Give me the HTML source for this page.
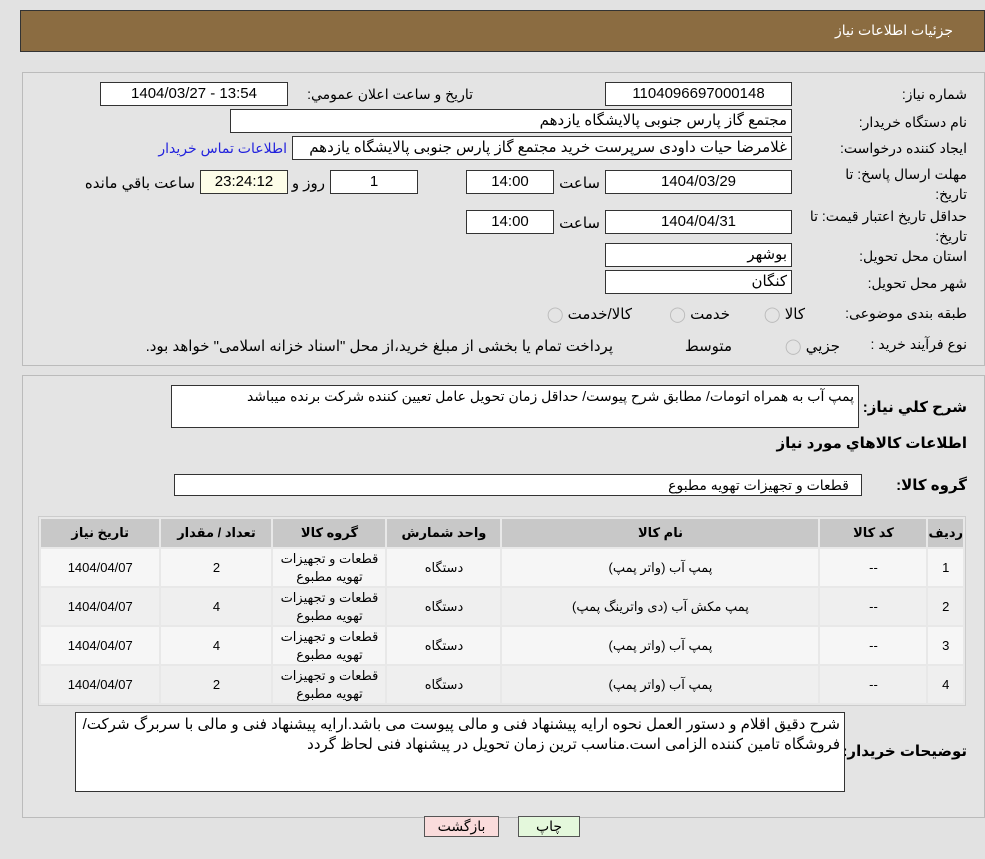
<!DOCTYPE html>
<html><head><meta charset="utf-8"><style>
body{margin:0;width:985px;height:859px;background:#e2e2e2;font-family:"Liberation Sans","DejaVu Sans",sans-serif;font-size:14px;color:#000;position:relative;overflow:hidden}
.a{position:absolute;white-space:nowrap}
.box{position:absolute;background:#fff;border:1px solid #333;box-sizing:border-box;text-align:center;line-height:22px;font-size:15px}
.lbl{position:absolute;direction:rtl;text-align:right;font-size:14px;white-space:nowrap}
.r{direction:rtl;text-align:right;padding-right:4px}
table{position:absolute;left:38px;top:516px;width:928px;border-collapse:separate;border-spacing:2px;background:#e8e8e8;direction:rtl;border:1px solid #ccc}
th{background:#c8c8c8;height:28px;font-size:13px;font-weight:bold;padding:0}
td{background:#f6f6f6;height:37px;text-align:center;font-size:13px;line-height:18px;padding:0}
tr:nth-child(odd) td{background:#efefef}
.btn{position:absolute;top:816px;height:21px;border:1px solid #555;box-sizing:border-box;text-align:center;line-height:19px;font-size:14px}
</style></head><body>
<div class="a" style="left:20px;top:10px;width:965px;height:42px;background:#8b6c41;border:1px solid #333;box-sizing:border-box"></div>
<div class="a" style="right:32px;top:22px;color:#fff;font-size:14px;direction:rtl">جزئیات اطلاعات نیاز</div>

<div class="a" style="left:22px;top:72px;width:963px;height:294px;border:1px solid #bbb;box-sizing:border-box;background:#e4e4e4"></div>
<div class="lbl" style="right:18px;top:86px">شماره نیاز:</div>
<div class="box" style="left:605px;top:82px;width:187px;height:24px">1104096697000148</div>
<div class="lbl" style="right:512px;top:86px">تاریخ و ساعت اعلان عمومي:</div>
<div class="box" style="left:100px;top:82px;width:188px;height:24px">1404/03/27 - 13:54</div>

<div class="lbl" style="right:18px;top:114px">نام دستگاه خریدار:</div>
<div class="box r" style="left:230px;top:109px;width:562px;height:24px">مجتمع گاز پارس جنوبی  پالایشگاه یازدهم</div>

<div class="lbl" style="right:18px;top:140px">ایجاد کننده درخواست:</div>
<div class="box r" style="left:292px;top:136px;width:500px;height:24px">غلامرضا حیات داودی سرپرست خرید مجتمع گاز پارس جنوبی  پالایشگاه یازدهم</div>
<div class="lbl" style="right:698px;top:140px;color:#2222dd">اطلاعات تماس خریدار</div>

<div class="lbl" style="right:18px;top:164px;line-height:20px">مهلت ارسال پاسخ: تا<br>تاریخ:</div>
<div class="box" style="left:605px;top:170px;width:187px;height:24px">1404/03/29</div>
<div class="lbl" style="right:385px;top:174px;font-size:15px">ساعت</div>
<div class="box" style="left:466px;top:170px;width:88px;height:24px">14:00</div>
<div class="box" style="left:330px;top:170px;width:88px;height:24px">1</div>
<div class="lbl" style="right:660px;top:174px;font-size:15px">روز و</div>
<div class="box" style="left:200px;top:170px;width:88px;height:24px;background:#fdfde8">23:24:12</div>
<div class="lbl" style="right:790px;top:174px;font-size:15px">ساعت باقي مانده</div>

<div class="lbl" style="right:18px;top:206px;line-height:20px">حداقل تاریخ اعتبار قیمت: تا<br>تاریخ:</div>
<div class="box" style="left:605px;top:210px;width:187px;height:24px">1404/04/31</div>
<div class="lbl" style="right:385px;top:214px;font-size:15px">ساعت</div>
<div class="box" style="left:466px;top:210px;width:88px;height:24px">14:00</div>

<div class="lbl" style="right:18px;top:248px">استان محل تحویل:</div>
<div class="box r" style="left:605px;top:243px;width:187px;height:24px">بوشهر</div>
<div class="lbl" style="right:18px;top:275px">شهر محل تحویل:</div>
<div class="box r" style="left:605px;top:270px;width:187px;height:24px">کنگان</div>

<div class="lbl" style="right:18px;top:305px">طبقه بندی موضوعی:</div>
<div class="lbl" style="right:180px;top:305px;font-size:15px">کالا <span style="color:#bbb">◯</span></div>
<div class="lbl" style="right:255px;top:305px;font-size:15px">خدمت <span style="color:#bbb">◯</span></div>
<div class="lbl" style="right:353px;top:305px;font-size:15px">کالا/خدمت <span style="color:#bbb">◯</span></div>
<div class="lbl" style="right:18px;top:336px">نوع فرآیند خرید :</div>
<div class="lbl" style="right:145px;top:337px;font-size:15px">جزیي <span style="color:#bbb">◯</span></div>
<div class="lbl" style="right:253px;top:337px;font-size:15px">متوسط</div>
<div class="lbl" style="right:372px;top:337px;font-size:15px">پرداخت تمام یا بخشی از مبلغ خرید،از محل "اسناد خزانه اسلامی" خواهد بود.</div>

<div class="a" style="left:22px;top:375px;width:963px;height:443px;border:1px solid #bbb;box-sizing:border-box;background:#e4e4e4"></div>
<div class="lbl" style="right:18px;top:398px;font-weight:bold;font-size:15px">شرح كلي نياز:</div>
<div class="box r" style="left:171px;top:385px;width:688px;height:43px;text-align:right;font-size:14px;line-height:20px">پمپ آب به همراه اتومات/ مطابق شرح پیوست/ حداقل زمان تحویل عامل تعیین کننده شرکت برنده میباشد</div>
<div class="lbl" style="right:18px;top:434px;font-weight:bold;font-size:15px">اطلاعات كالاهاي مورد نياز</div>
<div class="lbl" style="right:18px;top:476px;font-weight:bold;font-size:15px">گروه كالا:</div>
<div class="box r" style="left:174px;top:474px;width:688px;height:22px;text-align:right;padding-right:12px;font-size:14px;line-height:20px">قطعات و تجهیزات تهویه مطبوع</div>

<table>
<tr><th style="width:30px">رديف</th><th style="width:106px">كد كالا</th><th style="width:316px">نام كالا</th><th style="width:113px">واحد شمارش</th><th style="width:112px">گروه كالا</th><th style="width:110px">تعداد / مقدار</th><th>تاريخ نياز</th></tr>
<tr><td>1</td><td>--</td><td>پمپ آب (واتر پمپ)</td><td>دستگاه</td><td>قطعات و تجهیزات<br>تهویه مطبوع</td><td>2</td><td>1404/04/07</td></tr>
<tr><td>2</td><td>--</td><td>پمپ مکش آب (دی واترینگ پمپ)</td><td>دستگاه</td><td>قطعات و تجهیزات<br>تهویه مطبوع</td><td>4</td><td>1404/04/07</td></tr>
<tr><td>3</td><td>--</td><td>پمپ آب (واتر پمپ)</td><td>دستگاه</td><td>قطعات و تجهیزات<br>تهویه مطبوع</td><td>4</td><td>1404/04/07</td></tr>
<tr><td>4</td><td>--</td><td>پمپ آب (واتر پمپ)</td><td>دستگاه</td><td>قطعات و تجهیزات<br>تهویه مطبوع</td><td>2</td><td>1404/04/07</td></tr>
</table>

<div class="lbl" style="right:18px;top:742px;font-weight:bold;font-size:15px">توضيحات خريدار:</div>
<div class="box r" style="left:75px;top:712px;width:770px;height:80px;text-align:right;font-size:15px;line-height:20px;white-space:normal;padding-top:2px">شرح دقیق اقلام و دستور العمل نحوه ارایه پیشنهاد فنی و مالی پیوست می باشد.ارایه پیشنهاد فنی و مالی با سربرگ شرکت/فروشگاه تامین کننده الزامی است.مناسب ترین زمان تحویل در پیشنهاد فنی لحاظ گردد</div>

<div class="btn" style="left:424px;width:75px;background:#fadcdc">بازگشت</div>
<div class="btn" style="left:518px;width:62px;background:#e4f8dc">چاپ</div>
</body></html>
